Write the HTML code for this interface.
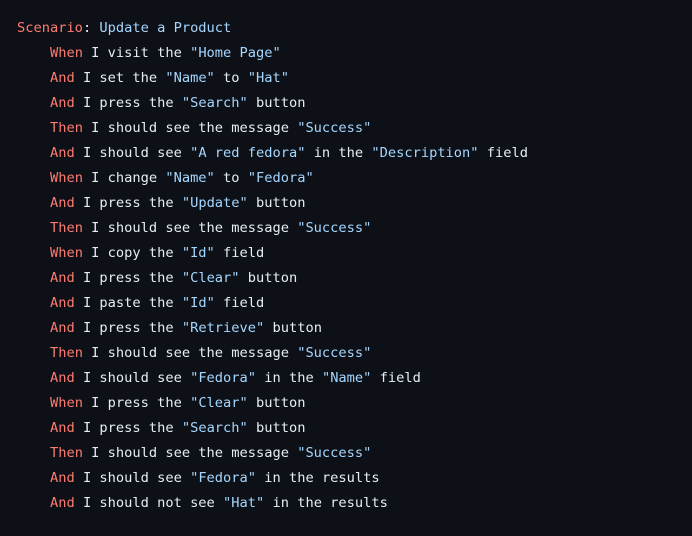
<!DOCTYPE html>
<html><head><meta charset="utf-8"><style>
html,body{margin:0;padding:0;background:#0d1117;width:692px;height:536px;overflow:hidden}
pre{margin:0;position:absolute;left:17px;top:16px;font-family:"DejaVu Sans Mono","Liberation Mono",monospace;font-size:13.7px;line-height:25px;color:#e6edf3}
.k{color:#ff7b72}.s{color:#a5d6ff}
</style></head><body><pre><span class="k">Scenario</span>: <span class="s">Update a Product</span>
    <span class="k">When</span> I visit the <span class="s">"Home Page"</span>
    <span class="k">And</span> I set the <span class="s">"Name"</span> to <span class="s">"Hat"</span>
    <span class="k">And</span> I press the <span class="s">"Search"</span> button
    <span class="k">Then</span> I should see the message <span class="s">"Success"</span>
    <span class="k">And</span> I should see <span class="s">"A red fedora"</span> in the <span class="s">"Description"</span> field
    <span class="k">When</span> I change <span class="s">"Name"</span> to <span class="s">"Fedora"</span>
    <span class="k">And</span> I press the <span class="s">"Update"</span> button
    <span class="k">Then</span> I should see the message <span class="s">"Success"</span>
    <span class="k">When</span> I copy the <span class="s">"Id"</span> field
    <span class="k">And</span> I press the <span class="s">"Clear"</span> button
    <span class="k">And</span> I paste the <span class="s">"Id"</span> field
    <span class="k">And</span> I press the <span class="s">"Retrieve"</span> button
    <span class="k">Then</span> I should see the message <span class="s">"Success"</span>
    <span class="k">And</span> I should see <span class="s">"Fedora"</span> in the <span class="s">"Name"</span> field
    <span class="k">When</span> I press the <span class="s">"Clear"</span> button
    <span class="k">And</span> I press the <span class="s">"Search"</span> button
    <span class="k">Then</span> I should see the message <span class="s">"Success"</span>
    <span class="k">And</span> I should see <span class="s">"Fedora"</span> in the results
    <span class="k">And</span> I should not see <span class="s">"Hat"</span> in the results</pre></body></html>
